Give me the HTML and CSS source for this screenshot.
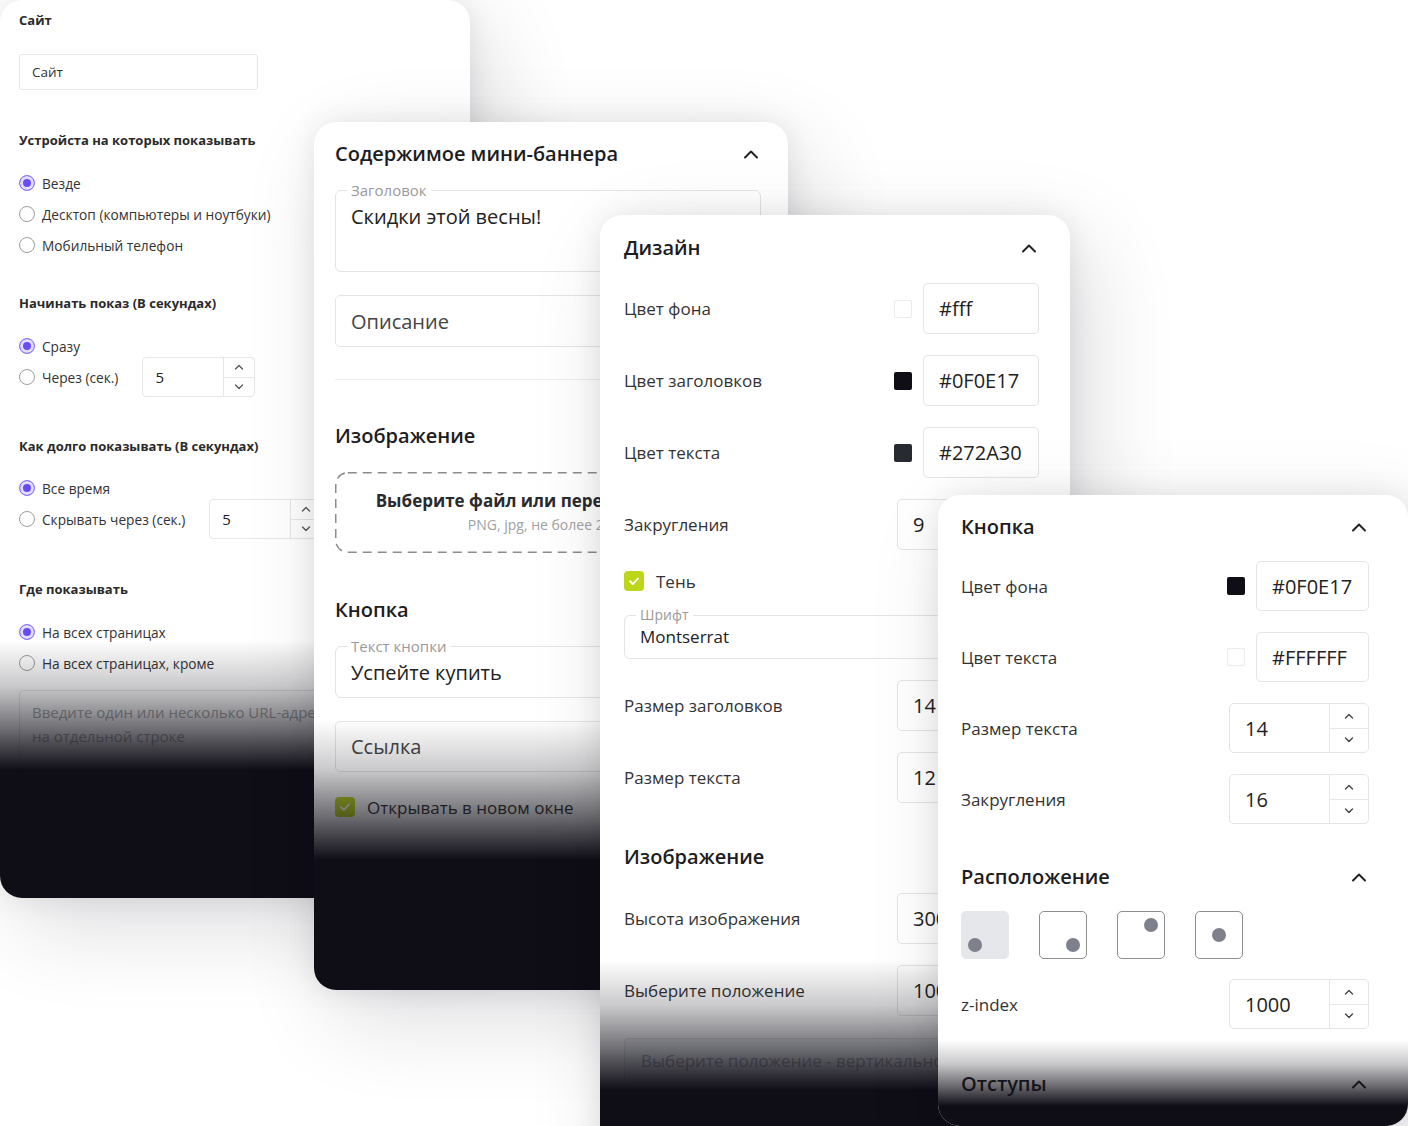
FILE: index.html
```html
<!DOCTYPE html>
<html lang="ru">
<head>
    <meta charset="UTF-8">
    <meta name="viewport" content="width=device-width, initial-scale=1.0">
    <title>Мини-баннер — настройки</title>
    <link rel="stylesheet" href="styles.css">
</head>
<body>
<div class="canvas">

    <!-- Panel 1: display conditions -->
    <section class="panel panel-site">
        <h3 class="group-title first">Сайт</h3>
        <div class="site-field">Сайт</div>

        <h3 class="group-title t41">Устройста на которых показывать</h3>
        <div class="radios">
            <label class="radio on"><span class="dot"></span>Везде</label>
            <label class="radio"><span class="dot"></span>Десктоп (компьютеры и ноутбуки)</label>
            <label class="radio"><span class="dot"></span>Мобильный телефон</label>
        </div>

        <h3 class="group-title t38">Начинать показ (В секундах)</h3>
        <div class="radios tight">
            <label class="radio on"><span class="dot"></span>Сразу</label>
            <div class="radio-num">
                <label class="radio"><span class="dot"></span>Через (сек.)</label>
                <div class="num small">
                    <span class="num-val">5</span>
                    <span class="num-spin">
                        <span><svg width="10" height="6" viewBox="0 0 10 6"><path d="M1.5 5 5 1.5 8.5 5" fill="none" stroke="#555" stroke-width="1.3" stroke-linecap="round" stroke-linejoin="round"/></svg></span>
                        <span><svg width="10" height="6" viewBox="0 0 10 6"><path d="M1.5 1 5 4.5 8.5 1" fill="none" stroke="#555" stroke-width="1.3" stroke-linecap="round" stroke-linejoin="round"/></svg></span>
                    </span>
                </div>
            </div>
        </div>

        <h3 class="group-title t40">Как долго показывать (В секундах)</h3>
        <div class="radios tight t22">
            <label class="radio on"><span class="dot"></span>Все время</label>
            <div class="radio-num">
                <label class="radio"><span class="dot"></span>Скрывать через (сек.)</label>
                <div class="num small">
                    <span class="num-val">5</span>
                    <span class="num-spin">
                        <span><svg width="10" height="6" viewBox="0 0 10 6"><path d="M1.5 5 5 1.5 8.5 5" fill="none" stroke="#555" stroke-width="1.3" stroke-linecap="round" stroke-linejoin="round"/></svg></span>
                        <span><svg width="10" height="6" viewBox="0 0 10 6"><path d="M1.5 1 5 4.5 8.5 1" fill="none" stroke="#555" stroke-width="1.3" stroke-linecap="round" stroke-linejoin="round"/></svg></span>
                    </span>
                </div>
            </div>
        </div>

        <h3 class="group-title t41">Где показывать</h3>
        <div class="radios">
            <label class="radio on"><span class="dot"></span>На всех страницах</label>
            <label class="radio"><span class="dot"></span>На всех страницах, кроме</label>
        </div>
        <div class="url-area">Введите один или несколько URL-адресов, каждый<br>на отдельной строке</div>
    </section>

    <!-- Panel 2: banner content -->
    <section class="panel panel-content">
        <div class="panel-head">
            <h2>Содержимое мини-баннера</h2>
            <svg class="chev" width="16" height="10" viewBox="0 0 16 10"><path d="M2 8.5 8 2.5l6 6" fill="none" stroke="#222" stroke-width="2" stroke-linecap="round" stroke-linejoin="round"/></svg>
        </div>

        <fieldset class="outlined first-field">
            <legend>Заголовок</legend>
            <div class="outlined-val tall">Скидки этой весны!</div>
        </fieldset>

        <div class="big-input t23">Описание</div>
        <hr class="divider">

        <h2 class="sub-title t42">Изображение</h2>
        <div class="dropzone">
            <svg class="dash" width="426" height="81" viewBox="0 0 426 81"><rect x="0.75" y="0.75" width="424.5" height="79.5" rx="12" fill="none" stroke="#8c8c8c" stroke-width="1.5" stroke-dasharray="9 6"/></svg>
            <div class="drop-title">Выберите файл или перетащите сюда</div>
            <div class="drop-sub">PNG, jpg, не более 2 Мб</div>
        </div>

        <h2 class="sub-title t43">Кнопка</h2>
        <fieldset class="outlined">
            <legend>Текст кнопки</legend>
            <div class="outlined-val">Успейте купить</div>
        </fieldset>

        <div class="big-input t23 h51">Ссылка</div>

        <label class="check t23">
            <span class="box-check"><svg width="12" height="10" viewBox="0 0 12 10"><path d="M2 5.2 4.8 8 10 2.5" fill="none" stroke="#fff" stroke-width="1.8" stroke-linecap="round" stroke-linejoin="round"/></svg></span>
            Открывать в новом окне
        </label>
    </section>

    <!-- Panel 3: design -->
    <section class="panel panel-design">
        <div class="panel-head">
            <h2>Дизайн</h2>
            <svg class="chev" width="16" height="10" viewBox="0 0 16 10"><path d="M2 8.5 8 2.5l6 6" fill="none" stroke="#222" stroke-width="2" stroke-linecap="round" stroke-linejoin="round"/></svg>
        </div>

        <div class="row">
            <span class="row-label">Цвет фона</span>
            <div class="color-ctl"><span class="swatch light"></span><span class="box color">#fff</span></div>
        </div>
        <div class="row">
            <span class="row-label">Цвет заголовков</span>
            <div class="color-ctl"><span class="swatch dark"></span><span class="box color">#0F0E17</span></div>
        </div>
        <div class="row">
            <span class="row-label">Цвет текста</span>
            <div class="color-ctl"><span class="swatch grey"></span><span class="box color">#272A30</span></div>
        </div>
        <div class="row">
            <span class="row-label">Закругления</span>
            <div class="num wide"><span class="num-val">9</span><span class="num-spin"><span></span><span></span></span></div>
        </div>

        <label class="check t19">
            <span class="box-check"><svg width="12" height="10" viewBox="0 0 12 10"><path d="M2 5.2 4.8 8 10 2.5" fill="none" stroke="#fff" stroke-width="1.8" stroke-linecap="round" stroke-linejoin="round"/></svg></span>
            Тень
        </label>

        <fieldset class="outlined small-legend">
            <legend>Шрифт</legend>
            <div class="outlined-val">Montserrat</div>
        </fieldset>

        <div class="row">
            <span class="row-label">Размер заголовков</span>
            <div class="num wide"><span class="num-val">14</span><span class="num-spin"><span></span><span></span></span></div>
        </div>
        <div class="row">
            <span class="row-label">Размер текста</span>
            <div class="num wide"><span class="num-val">12</span><span class="num-spin"><span></span><span></span></span></div>
        </div>

        <h2 class="sub-title t40">Изображение</h2>
        <div class="row t22">
            <span class="row-label">Высота изображения</span>
            <div class="num wide"><span class="num-val">300</span><span class="num-spin"><span></span><span></span></span></div>
        </div>
        <div class="row">
            <span class="row-label">Выберите положение</span>
            <div class="num wide"><span class="num-val">100</span><span class="num-spin"><span></span><span></span></span></div>
        </div>
        <div class="select-box">Выберите положение - вертикально</div>
    </section>

    <!-- Panel 4: button -->
    <section class="panel panel-button">
        <div class="panel-head">
            <h2>Кнопка</h2>
            <svg class="chev" width="16" height="10" viewBox="0 0 16 10"><path d="M2 8.5 8 2.5l6 6" fill="none" stroke="#222" stroke-width="2" stroke-linecap="round" stroke-linejoin="round"/></svg>
        </div>

        <div class="row t20">
            <span class="row-label">Цвет фона</span>
            <div class="color-ctl"><span class="swatch dark"></span><span class="box color">#0F0E17</span></div>
        </div>
        <div class="row">
            <span class="row-label">Цвет текста</span>
            <div class="color-ctl"><span class="swatch light"></span><span class="box color">#FFFFFF</span></div>
        </div>
        <div class="row">
            <span class="row-label">Размер текста</span>
            <div class="num wide">
                <span class="num-val">14</span>
                <span class="num-spin">
                    <span><svg width="10" height="6" viewBox="0 0 10 6"><path d="M1.5 5 5 1.5 8.5 5" fill="none" stroke="#444" stroke-width="1.4" stroke-linecap="round" stroke-linejoin="round"/></svg></span>
                    <span><svg width="10" height="6" viewBox="0 0 10 6"><path d="M1.5 1 5 4.5 8.5 1" fill="none" stroke="#444" stroke-width="1.4" stroke-linecap="round" stroke-linejoin="round"/></svg></span>
                </span>
            </div>
        </div>
        <div class="row">
            <span class="row-label">Закругления</span>
            <div class="num wide">
                <span class="num-val">16</span>
                <span class="num-spin">
                    <span><svg width="10" height="6" viewBox="0 0 10 6"><path d="M1.5 5 5 1.5 8.5 5" fill="none" stroke="#444" stroke-width="1.4" stroke-linecap="round" stroke-linejoin="round"/></svg></span>
                    <span><svg width="10" height="6" viewBox="0 0 10 6"><path d="M1.5 1 5 4.5 8.5 1" fill="none" stroke="#444" stroke-width="1.4" stroke-linecap="round" stroke-linejoin="round"/></svg></span>
                </span>
            </div>
        </div>

        <div class="panel-head t39">
            <h2>Расположение</h2>
            <svg class="chev" width="16" height="10" viewBox="0 0 16 10"><path d="M2 8.5 8 2.5l6 6" fill="none" stroke="#222" stroke-width="2" stroke-linecap="round" stroke-linejoin="round"/></svg>
        </div>
        <div class="positions">
            <span class="pos active bottom-left"><i></i></span>
            <span class="pos bottom-right"><i></i></span>
            <span class="pos top-right"><i></i></span>
            <span class="pos center"><i></i></span>
        </div>

        <div class="row t20">
            <span class="row-label">z-index</span>
            <div class="num wide">
                <span class="num-val">1000</span>
                <span class="num-spin">
                    <span><svg width="10" height="6" viewBox="0 0 10 6"><path d="M1.5 5 5 1.5 8.5 5" fill="none" stroke="#444" stroke-width="1.4" stroke-linecap="round" stroke-linejoin="round"/></svg></span>
                    <span><svg width="10" height="6" viewBox="0 0 10 6"><path d="M1.5 1 5 4.5 8.5 1" fill="none" stroke="#444" stroke-width="1.4" stroke-linecap="round" stroke-linejoin="round"/></svg></span>
                </span>
            </div>
        </div>

        <div class="panel-head t41">
            <h2>Отступы</h2>
            <svg class="chev" width="16" height="10" viewBox="0 0 16 10"><path d="M2 8.5 8 2.5l6 6" fill="none" stroke="#222" stroke-width="2" stroke-linecap="round" stroke-linejoin="round"/></svg>
        </div>
    </section>

</div>
</body>
</html>
```

FILE: styles.css
```css
* {
    box-sizing: border-box;
}

body {
    margin: 0;
    background: #fff;
    font-family: "Open Sans", "Noto Sans", sans-serif;
    color: #2c2c30;
    overflow: hidden;
}

.canvas {
    position: relative;
    width: 1408px;
    height: 1126px;
    overflow: hidden;
    background: #fff;
}

/* Floating panels */
.panel {
    position: absolute;
    background: #fff;
    border-radius: 22px;
    overflow: hidden;
    box-shadow: 0 0 30px rgba(0, 0, 0, 0.09), 18px 28px 90px rgba(10, 10, 30, 0.14);
}

/* dark fade at the bottom of every panel */
.panel::after {
    content: "";
    position: absolute;
    left: 0;
    right: 0;
    top: var(--fade-top);
    bottom: 0;
    pointer-events: none;
    background: linear-gradient(to bottom,
        rgba(15, 14, 23, 0) 0,
        rgba(15, 14, 23, 0.22) calc(var(--fade-len) * 0.35),
        rgba(15, 14, 23, 0.62) calc(var(--fade-len) * 0.7),
        #0f0e17 var(--fade-len));
}

.panel-site {
    left: 0;
    top: 0;
    width: 470px;
    height: 898px;
    padding: 11px 0 0 19px;
    --fade-top: 640px;
    --fade-len: 130px;
}

.panel-content {
    left: 314px;
    top: 122px;
    width: 474px;
    height: 868px;
    padding: 18px 27px 0 21px;
    --fade-top: 598px;
    --fade-len: 140px;
}

.panel-design {
    left: 600px;
    top: 215px;
    width: 470px;
    height: 960px;
    padding: 19px 31px 0 24px;
    --fade-top: 745px;
    --fade-len: 130px;
}

.panel-button {
    left: 938px;
    top: 495px;
    width: 470px;
    height: 631px;
    padding: 18px 39px 0 23px;
    --fade-top: 545px;
    --fade-len: 66px;
}

/* ---------- panel 1 ---------- */
.group-title {
    margin: 0;
    font-size: 13px;
    line-height: 18px;
    font-weight: 700;
    color: #2a2a2a;
}

.site-field {
    margin-top: 25px;
    width: 239px;
    height: 36px;
    padding: 0 12px;
    display: flex;
    align-items: center;
    border: 1px solid #e5e5e5;
    border-radius: 3px;
    font-size: 13.5px;
    color: #333;
}

.radios {
    margin-top: 23px;
    display: flex;
    flex-direction: column;
    gap: 9px;
}

.radios.tight {
    gap: 0;
}

.radio {
    display: flex;
    align-items: center;
    gap: 7px;
    height: 22px;
    font-size: 13.7px;
    color: #333;
}

.radio .dot {
    width: 16px;
    height: 16px;
    border-radius: 50%;
    border: 1.5px solid #9c9c9c;
    flex-shrink: 0;
}

.radio.on .dot {
    border-color: #8c78fb;
    background: #6a4cf5;
    box-shadow: inset 0 0 0 3px #e3ddff;
}

.radio-num {
    display: flex;
    align-items: center;
    gap: 24px;
    height: 40px;
}

.num {
    display: flex;
    border: 1px solid #e6e6e6;
    border-radius: 4px;
    background: #fff;
}

.num-val {
    flex: 1;
    display: flex;
    align-items: center;
}

.num-spin {
    display: flex;
    flex-direction: column;
    border-left: 1px solid #e6e6e6;
}

.num-spin span {
    flex: 1;
    display: flex;
    align-items: center;
    justify-content: center;
}

.num-spin span + span {
    border-top: 1px solid #e6e6e6;
}

.num.small {
    width: 113px;
    height: 40px;
}

.num.small .num-val {
    padding-left: 12px;
    font-size: 15px;
    color: #222;
}

.num.small .num-spin {
    width: 31px;
}

.url-area {
    margin-top: 16px;
    width: 430px;
    height: 84px;
    padding: 9px 12px;
    border: 1px solid #e5e5e5;
    border-radius: 4px;
    font-size: 15px;
    line-height: 24px;
    color: #a8a8a8;
    white-space: nowrap;
}

/* ---------- shared for large panels ---------- */
.panel-head {
    display: flex;
    align-items: center;
    justify-content: space-between;
}

.panel-head h2,
.sub-title {
    margin: 0;
    font-size: 20px;
    line-height: 28px;
    font-weight: 600;
    color: #1d1c22;
}

.chev {
    margin-right: 2px;
}

.outlined {
    margin: 13px 0 0;
    padding: 0 14px 10px 11px;
    border: 1px solid #e4e4e4;
    border-radius: 6px;
    min-width: 0;
}

.outlined legend {
    padding: 0 4px;
    font-size: 15px;
    line-height: 18px;
    color: #9a9a9a;
}

.outlined-val {
    padding: 4px 0 0 4px;
    font-size: 20px;
    line-height: 28px;
    color: #222;
}

.outlined.first-field {
    padding-bottom: 0;
}

.outlined-val.tall {
    height: 72px;
}

.big-input {
    height: 52px;
    padding: 0 15px;
    display: flex;
    align-items: center;
    border: 1px solid #e4e4e4;
    border-radius: 5px;
    font-size: 20px;
    color: #444;
}

.big-input.h51 {
    height: 51px;
}

.divider {
    margin: 32px 0 0;
    border: 0;
    border-top: 1px solid #ececec;
}

.dropzone {
    position: relative;
    margin-top: 22px;
    height: 81px;
    padding-top: 17px;
    text-align: center;
}

.dropzone .dash {
    position: absolute;
    left: 0;
    top: 0;
}

.drop-title {
    font-size: 17px;
    line-height: 24px;
    font-weight: 700;
    color: #2a2a2e;
}

.drop-sub {
    margin-top: 2px;
    font-size: 14px;
    line-height: 20px;
    color: #a2a2a2;
}

.check {
    display: flex;
    align-items: center;
    gap: 12px;
    height: 24px;
    font-size: 17px;
    color: #333;
}

.box-check {
    width: 20px;
    height: 20px;
    border-radius: 4px;
    background: #bdd61c;
    display: flex;
    align-items: center;
    justify-content: center;
}

/* ---------- panels 3 & 4 rows ---------- */
.row {
    margin-top: 21px;
    height: 51px;
    display: flex;
    align-items: center;
    justify-content: space-between;
}

.panel-button .row {
    height: 50px;
}

.row-label {
    font-size: 17px;
    color: #333;
}

.color-ctl {
    display: flex;
    align-items: center;
    gap: 11px;
    height: 100%;
}

.swatch {
    width: 18px;
    height: 18px;
    border-radius: 2px;
}

.swatch.light {
    border: 1px solid #ececec;
    background: #fff;
}

.swatch.dark {
    background: #0f0e17;
}

.swatch.grey {
    background: #272a30;
}

.box {
    height: 100%;
    display: flex;
    align-items: center;
    border: 1px solid #e4e4e4;
    border-radius: 5px;
    font-size: 20px;
    color: #222;
}

.box.color {
    width: 116px;
    padding: 0 15px;
}

.panel-button .box.color {
    width: 113px;
}

.num.wide {
    width: 142px;
    height: 100%;
    border-color: #e4e4e4;
    border-radius: 5px;
}

.panel-button .num.wide {
    width: 140px;
}

.num.wide .num-val {
    padding-left: 15px;
    font-size: 20px;
    color: #222;
}

.num.wide .num-spin {
    width: 39px;
}

.small-legend {
    margin-top: 14px;
    padding-bottom: 9px;
}

.small-legend legend {
    font-size: 14px;
    line-height: 16px;
}

.small-legend .outlined-val {
    padding-top: 2px;
    font-size: 17px;
    line-height: 24px;
}

.select-box {
    margin-top: 22px;
    height: 44px;
    padding: 0 16px;
    display: flex;
    align-items: center;
    border: 1px solid #e4e4e4;
    border-radius: 5px;
    background: #f6f8fb;
    font-size: 17px;
    color: #a9a9ad;
    white-space: nowrap;
}

/* position picker */
.positions {
    margin-top: 20px;
    display: flex;
    gap: 30px;
}

.pos {
    width: 48px;
    height: 48px;
    padding: 6px;
    border: 1.5px solid #8d8d8d;
    border-radius: 5px;
    display: flex;
}

.pos i {
    width: 14px;
    height: 14px;
    border-radius: 50%;
    background: #7e818b;
}

.pos.active {
    border-color: #e6e7eb;
    background: #e6e7eb;
}

.pos.bottom-left { align-items: flex-end; justify-content: flex-start; }
.pos.bottom-right { align-items: flex-end; justify-content: flex-end; }
.pos.top-right { align-items: flex-start; justify-content: flex-end; }
.pos.center { align-items: center; justify-content: center; }

/* spacing helpers (kept last so they win) */
.t19 { margin-top: 19px; }
.t20 { margin-top: 20px; }
.t22 { margin-top: 22px; }
.t23 { margin-top: 23px; }
.t38 { margin-top: 38px; }
.t39 { margin-top: 39px; }
.t40 { margin-top: 40px; }
.t41 { margin-top: 41px; }
.t42 { margin-top: 42px; }
.t43 { margin-top: 43px; }
```
